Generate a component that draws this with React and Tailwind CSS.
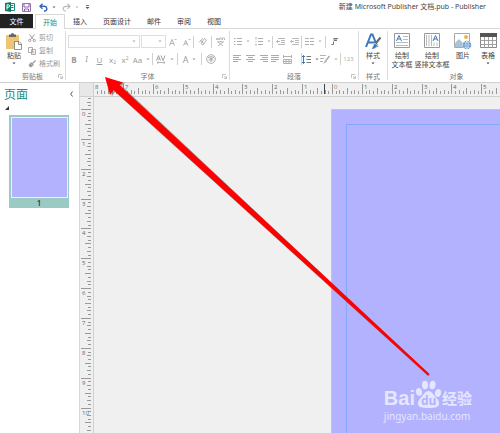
import React from "react";

const Svg = ({ w, h, children }) => (
  <svg width={w} height={h} viewBox={`0 0 ${w} ${h}`} fill="none" stroke="currentColor" className="shrink-0" aria-hidden="true">
    {children}
  </svg>
);

const Caret = () => (
  <Svg w={4} h={3}>
    <path d="M0.5 0.5h3L2 2.3z" fill="currentColor" stroke="none" />
  </Svg>
);

const Sep = () => <span className="h-3 w-px shrink-0 bg-[#d0d0d0]" />;

function Tool({ label, className, caret, children }) {
  return (
    <button aria-label={label} className={`flex h-4 shrink-0 items-center justify-center gap-1 ${className}`}>
      {children}
      {caret && <Caret />}
    </button>
  );
}

function Group({ title, className, launcher, children }) {
  return (
    <section className={`flex shrink-0 flex-col border-r border-[#dcdcdc] ${className}`}>
      <div className="h-[42px]">{children}</div>
      <div className="relative flex h-2 items-center justify-center text-[#777]">
        {title}
        {launcher && (
          <button aria-label={`${title}设置`} className="absolute right-0.5 top-0.5 text-[#aaa]">
            <Svg w={5} h={5}>
              <path d="M0.5 4V0.5H4M2 2l2.3 2.3M4.5 2v2.5H2" strokeWidth="0.7" />
            </Svg>
          </button>
        )}
      </div>
    </section>
  );
}

function Combo({ label, className }) {
  return (
    <label className={`relative block h-[13px] shrink-0 ${className}`}>
      <select aria-label={label} className="block h-full w-full appearance-none border border-[#dedede] bg-white" />
      <span className="pointer-events-none absolute right-1 top-[5px] text-[#aaa]">
        <Caret />
      </span>
    </label>
  );
}

const Lines = ({ rows, color = "currentColor" }) => (
  <Svg w={9} h={8}>
    {rows.map(([a, b], i) => (
      <path key={i} d={`M${a} ${i * 2 + 0.5}H${b}`} stroke={color} />
    ))}
  </Svg>
);

function BigTool({ icon, lines, caret, className }) {
  return (
    <button className={`flex shrink-0 flex-col items-center text-[#444] ${className}`}>
      <span className="mb-[2px] flex h-4 items-center">{icon}</span>
      {lines.map((l) => (
        <span key={l} className="block h-[9px] whitespace-nowrap leading-[9px]">{l}</span>
      ))}
      {caret && <span className="mt-0.5"><Caret /></span>}
    </button>
  );
}

const STEP = 29.85;

function useWindowSize() {
  const [size, setSize] = React.useState([window.innerWidth, window.innerHeight]);
  React.useEffect(() => {
    const update = () => setSize([window.innerWidth, window.innerHeight]);
    window.addEventListener("resize", update);
    return () => window.removeEventListener("resize", update);
  }, []);
  return size;
}

function makeTicks(from, zero, length) {
  const ticks = [];
  for (let i = from; zero + (i * STEP) / 8 < length; i++) ticks.push(i);
  return ticks;
}

const tickLength = (i) => (i % 8 === 0 ? 10 : i % 4 === 0 ? 6 : i % 2 === 0 ? 4 : 3);

function HorizontalRuler() {
  const [width] = useWindowSize();
  const zero = 238;
  const ticks = makeTicks(-63, zero, width - 94);
  const labels = [-64, ...ticks].filter((i) => i % 8 === 0 && zero + (i * STEP) / 8 < width - 100);
  return (
    <svg height="13" className="block w-full" aria-label="水平标尺">
      {ticks.map((i) => (
        <rect key={i} x={Math.round(zero + (i * STEP) / 8)} y={11 - tickLength(i)} width="1" height={tickLength(i)} fill="#999" />
      ))}
      {labels.map((i) => (
        <text key={i} x={Math.max(0, Math.round(zero + (i * STEP) / 8) + 2)} y="6" fontSize="6" fill={i === 0 ? "#a87850" : "#666"}>
          {Math.abs(i / 8)}
        </text>
      ))}
      <rect x="230" y="1" width="1" height="10" fill="#444" />
    </svg>
  );
}

function VerticalRuler() {
  const [, height] = useWindowSize();
  const zero = 12;
  const ticks = makeTicks(-3, zero, height - 97);
  return (
    <svg width="13" className="block h-full" aria-label="垂直标尺">
      {ticks.map((i) => (
        <rect key={i} x={11 - tickLength(i)} y={Math.round(zero + (i * STEP) / 8)} width={tickLength(i)} height="1" fill="#999" />
      ))}
      {ticks.filter((i) => i % 8 === 0).map((i) => (
        <text key={i} x="2" y={Math.round(zero + (i * STEP) / 8) + 7} fontSize="6" fill="#666">
          {i / 8}
        </text>
      ))}
    </svg>
  );
}

function TitleBar() {
  return (
    <header className="flex h-[14px] items-center justify-between pl-[5px] pr-[14px]">
      <div className="flex items-center">
        <Svg w={10} h={10}>
          <path d="M4.5 1.5h5v7h-5" fill="#fff" stroke="#188a72" />
          <path d="M6 3.5h2.500M6 5.500h2.500" stroke="#188a72" />
          <path d="M0 1l6-1v10l-6-1z" fill="#107c65" stroke="none" />
          <path d="M2 7.500V2.800h1.300a1.200 1.200 0 010 2.500H2" stroke="#fff" />
        </Svg>
        <button aria-label="保存" className="ml-[7px] text-[#8a62a8]">
          <Svg w={9} h={9}>
            <path d="M0.600 0.600h7.800v7.800H0.600z M2 1v3h5V1M2.500 8V6h4v2" strokeWidth="1" />
          </Svg>
        </button>
        <button aria-label="撤消" className="ml-2 flex items-center gap-1 text-[#3665b5]">
          <Svg w={9} h={9}>
            <path d="M3.500 0.800L1 3.300l2.500 2.500M1 3.300h4.500a2.400 2.400 0 01.6 4.700H5" strokeWidth="1.400" />
          </Svg>
          <span className="text-[#666]"><Caret /></span>
        </button>
        <button aria-label="恢复" className="ml-1.5 flex items-center gap-1 text-[#b9b9c2]">
          <Svg w={9} h={9}>
            <path d="M5.500 0.800L8 3.300L5.500 5.800M8 3.300H3.500a2.400 2.400 0 00-.6 4.700H4" strokeWidth="1.200" />
          </Svg>
          <Caret />
        </button>
        <button aria-label="自定义快速访问工具栏" className="ml-1.5 text-[#555]">
          <Svg w={5} h={6}>
            <path d="M1 1.500h3" strokeWidth="0.800" />
            <path d="M0.500 3h4L2.500 5z" fill="currentColor" stroke="none" />
          </Svg>
        </button>
      </div>
      <h1 className="whitespace-nowrap font-['Noto_Sans','Noto_Sans_CJK_SC',sans-serif] text-[7px] leading-3 text-[#444]">新建 Microsoft Publisher 文档.pub - Publisher</h1>
    </header>
  );
}

function Tabs() {
  return (
    <nav className="flex h-[15px] items-stretch border-b border-[#d8d8d8] text-[#333]">
      <button className="w-[33px] bg-[#222] text-white">文件</button>
      <button className="-mb-px ml-[2px] w-[30px] border border-b-0 border-[#d8d8d8] bg-white text-[#188a72]">开始</button>
      <div className="ml-2 flex gap-4">
        {["插入", "页面设计", "邮件", "审阅", "视图"].map((t) => (
          <button key={t}>{t}</button>
        ))}
      </div>
    </nav>
  );
}

function Ribbon() {
  return (
    <div className="flex h-[54px] overflow-hidden border-b border-[#d0d0d0] pt-[2px] pb-[2px]">
      <Group title="剪贴板" className="w-[66px]" launcher>
        <div className="flex pl-[6px]">
          <BigTool
            className="w-4 pt-[2px]"
            lines={["粘贴"]}
            caret
            icon={
              <Svg w={16} h={17}>
                <path d="M0 2h13v14H0z" fill="#eec575" stroke="none" />
                <path d="M3 1.500h2a1.500 1.500 0 013 0h2V4H3z" fill="#666" stroke="none" />
                <path d="M8.500 8.500h4.500l2.500 2.500v5.500h-7z M12.500 8.500v3h3" fill="#fff" stroke="#777" strokeWidth="0.800" />
              </Svg>
            }
          />
          <div className="ml-1.5 flex flex-col text-[#999]">
            <button className="flex h-[13px] items-center gap-[3px]">
              <Svg w={8} h={8}>
                <path d="M1.500 0.500l4 5M6.500 0.500l-4 5" />
                <circle cx="1.700" cy="6.500" r="1.100" /><circle cx="6.300" cy="6.500" r="1.100" />
              </Svg>
              剪切
            </button>
            <button className="flex h-[13px] items-center gap-[3px]">
              <Svg w={8} h={8}>
                <path d="M0.500 0.500h4v5h-4zM3.500 2.500h4v5h-4z" fill="#fff" strokeWidth="0.800" />
                <path d="M4.500 4.500h2M4.500 6h2" strokeWidth="0.600" />
              </Svg>
              复制
            </button>
            <button className="flex h-[13px] items-center gap-[3px]">
              <Svg w={8} h={8}>
                <path d="M7.500 0.500L4.500 3.500M2.500 2.500l3 3" strokeWidth="1.200" />
                <path d="M2 3L0.500 5.500l2 2L5 6z" fill="currentColor" stroke="none" />
              </Svg>
              格式刷
            </button>
          </div>
        </div>
      </Group>

      <Group title="字体" className="w-[164px]" launcher>
        <div className="flex h-[21px] items-center pl-[2px] text-[#aaa]">
          <Combo label="字体" className="w-[72px]" />
          <Combo label="字号" className="ml-px w-[25px]" />
          <Tool label="增大字号" className="w-[14px]">
            <Svg w={8} h={8}><path d="M0.500 7.500L3 1.500l2.500 6M1.500 5.500h3M5.500 2l1-1 1 1" strokeWidth="0.900" /></Svg>
          </Tool>
          <Tool label="减小字号" className="w-[13px]">
            <Svg w={8} h={8}><path d="M0.500 7.500L2.800 2.500l2.200 5M1.500 5.800h2.700M5.500 1l1 1 1-1" strokeWidth="0.900" /></Svg>
          </Tool>
          <Sep />
          <Tool label="清除格式" className="w-[17px]">
            <Svg w={9} h={9}><path d="M1 5.500l4-4.500M2 3.500l3 1.500M3 6.500l3.500-5 2 1.500-3.500 5zM4 5l2 1.500" strokeWidth="0.900" /></Svg>
          </Tool>
          <Sep />
          <Tool label="拼音指南" className="w-[17px]">
            <Svg w={9} h={9}><path d="M0 1l1 2 1-2 1 2 1-2M5 0v3M6.500 3V1h2v2M1 4.800h7M4.500 3.800v1M2 5l5 4M7 5l-5 4" strokeWidth="0.800" /></Svg>
          </Tool>
        </div>
        <div className="flex h-[14px] items-center pl-[2px] text-[8px] text-[#999]">
          <Tool label="加粗" className="w-3 font-bold">B</Tool>
          <Tool label="倾斜" className="w-[13px] font-serif italic">I</Tool>
          <Tool label="下划线" className="w-[13px] underline">U</Tool>
          <Tool label="下标" className="w-[13px]"><span>x<sub className="text-[5px]">2</sub></span></Tool>
          <Tool label="上标" className="w-3"><span>x<sup className="text-[5px]">2</sup></span></Tool>
          <Tool label="更改大小写" className="w-[21px]" caret>Aa</Tool>
          <Sep />
          <Tool label="字符间距" className="w-6" caret>
            <Svg w={10} h={9}>
              <path d="M0.500 5.500L2.500 0.500l2 5M1.300 4h2.400M5 0.500l2 5 2-5" strokeWidth="0.900" />
              <path d="M1 7.500h8M2.500 6.300L1 7.500l1.500 1.200M7.500 6.300L9 7.500 7.500 8.700" strokeWidth="0.700" />
            </Svg>
          </Tool>
          <Sep />
          <Tool label="字体颜色" className="w-[23px] text-[9px]" caret>A</Tool>
          <Sep />
          <Tool label="带圈字符" className="w-[18px]">
            <Svg w={10} h={10}>
              <circle cx="5" cy="5" r="4.300" strokeWidth="0.800" />
              <path d="M2.500 4V3h5v1M3.500 4.500h3L5 5.500V8M2.500 6h5M5 2v1" strokeWidth="0.800" />
            </Svg>
          </Tool>
        </div>
      </Group>

      <Group title="段落" className="w-[129px]" launcher>
        <div className="flex h-[21px] items-center pl-px text-[#b0b0b0]">
          <Tool label="项目符号" className="w-[22px]" caret>
            <Svg w={8} h={9}><path d="M0 1.500h1.500M3 1.500h5M0 4.500h1.500M3 4.500h5M0 7.500h1.500M3 7.500h5" /></Svg>
          </Tool>
          <Tool label="编号" className="w-[19px]" caret>
            <Svg w={8} h={9}><path d="M1 0v2.500M3 1.500h5M0.500 4.500h1M3 4.500h5M1 6.500v2.500M3 7.500h5" /></Svg>
          </Tool>
          <Sep />
          <Tool label="减少缩进" className="w-[15px]">
            <Svg w={9} h={8}><path d="M2 0.500h7M5 2.500h4M5 4.500h4M2 6.500h7M4 3.500H0.500M2 2L0.500 3.500 2 5" strokeWidth="0.900" /></Svg>
          </Tool>
          <Tool label="增加缩进" className="w-[13px]">
            <Svg w={9} h={8}><path d="M2 0.500h7M5 2.500h4M5 4.500h4M2 6.500h7M4 3.500H0.500M2 2L0.500 3.500 2 5" strokeWidth="0.900" /></Svg>
          </Tool>
          <Sep />
          <Tool label="分栏" className="w-[23px]" caret>
            <Svg w={9} h={7}><path d="M0 0.500h4M5 0.500h4M0 3.500h4M5 3.500h4M0 6.500h4M5 6.500h4" /></Svg>
          </Tool>
          <Sep />
          <Tool label="文字方向" className="w-[18px] text-[#777]">
            <Svg w={8} h={9}><path d="M3 1.500h4M3 1v2.500h3M5 1.500V3M0.500 7.500h2V4.500" /></Svg>
          </Tool>
        </div>
        <div className="flex h-[14px] items-center pl-px text-[#aaa]">
          <Tool label="左对齐" className="w-[13px]"><Lines rows={[[0, 8], [0, 6], [0, 8], [0, 5]]} /></Tool>
          <Tool label="居中" className="w-[13px]"><Lines rows={[[0, 9], [2, 7], [0, 9], [2, 7]]} /></Tool>
          <Tool label="右对齐" className="w-[12px]"><Lines rows={[[1, 9], [3, 9], [1, 9], [4, 9]]} /></Tool>
          <Tool label="两端对齐" className="w-[12px]"><Lines rows={[[0, 8], [0, 8], [0, 8], [0, 5]]} /></Tool>
          <Tool label="分散对齐" className="w-[13px]">
            <Svg w={9} h={9}><path d="M0.500 0v3M8.500 0v3M0 1.500h9M0.500 4.500h8v4h-8zM0 6.500h9M3 4v5M6 4v5" strokeWidth="0.900" /></Svg>
          </Tool>
          <span className="ml-[7px] flex items-center">
            <Sep />
            <Tool label="行距" className="w-[16px] text-[#777]" caret>
              <Svg w={9} h={9}>
                <path d="M1.500 0.500v8M0 2L1.500 0.500 3 2M0 7l1.500 1.500L3 7" stroke="#3b78b5" />
                <path d="M4.500 1.500H9M4.500 4.500H9M4.500 7.500H9" />
              </Svg>
            </Tool>
            <Tool label="段落底纹" className="w-[22px]" caret>
              <Svg w={10} h={9}>
                <path d="M0 0.500h6M0 3.500h4M0 6.500h3" strokeWidth="0.900" />
                <path d="M9.500 1L6 5.500" strokeWidth="1.500" /><path d="M5.500 5L7 6.500 3 9z" fill="currentColor" stroke="none" />
              </Svg>
            </Tool>
            <Sep />
            <Tool label="数字样式" className="w-[15px] text-[6px]">123</Tool>
          </span>
        </div>
      </Group>

      <Group title="样式" className="w-[29px]">
        <div className="flex justify-center pt-[2px]">
          <BigTool
            lines={["样式"]}
            caret
            icon={
              <Svg w={17} h={17}>
                <path d="M1 14L6 1.500h1.500L12.500 14M3 9.500h7.500" stroke="#3b78bd" strokeWidth="2" />
                <path d="M15.500 4.500L11 10" stroke="#666" strokeWidth="2" />
                <path d="M9.500 10l3 2.500c-1 3-4 4-6.500 3.500 2-1.500 2-4 3.500-6z" fill="#3b78bd" stroke="#fff" strokeWidth="0.600" />
              </Svg>
            }
          />
        </div>
      </Group>

      <section className="flex w-[153px] shrink-0 flex-col">
        <div className="flex h-[42px] pl-[2px] pt-[2px]">
          <BigTool
            className="w-6"
            lines={["绘制", "文本框"]}
            icon={
              <Svg w={16} h={16}>
                <path d="M0.500 0.500h15v14H0.500z" fill="#fff" stroke="#999" />
                <path d="M2.500 8L5 2.500 7.500 8M3.500 6h3" stroke="#3b78bd" />
                <path d="M9 3.500h5M9 6.500h5M2 9.500h12M2 12.500h12" stroke="#aaa" strokeWidth="0.800" />
              </Svg>
            }
          />
          <BigTool
            className="w-[36px]"
            lines={["绘制", "竖排文本框"]}
            icon={
              <Svg w={16} h={16}>
                <path d="M0.500 0.500h15v14H0.500z" fill="#fff" stroke="#999" />
                <path d="M9 8l2.500-5.500L14 8M10 6h3" stroke="#3b78bd" />
                <path d="M2.500 2v11M5 2v11M7.500 2v11M10 9.500V13M13 9.500V13" stroke="#aaa" strokeWidth="0.800" />
              </Svg>
            }
          />
          <BigTool
            className="w-[26px]"
            lines={["图片"]}
            icon={
              <Svg w={18} h={17}>
                <path d="M0.500 0.500h15v14H0.500z" fill="#fff" stroke="#aaa" />
                <path d="M1 14V10l4-4 4 4 2 4z" fill="#a9c3dc" stroke="none" />
                <circle cx="12" cy="4" r="2" fill="#f0b34a" stroke="none" />
                <circle cx="13" cy="12" r="4.300" fill="#3b78bd" stroke="#fff" strokeWidth="0.500" />
                <path d="M9 12h8M13 8v8M10 9.800h6M10 14.200h6M13 8c-2.500 2-2.500 6 0 8M13 8c2.500 2 2.500 6 0 8" stroke="#fff" strokeWidth="0.600" />
              </Svg>
            }
          />
          <BigTool
            className="w-[24px]"
            lines={["表格"]}
            caret
            icon={
              <Svg w={17} h={16}>
                <path d="M0.500 0.500h16v14H0.500z" fill="#fff" stroke="#888" />
                <path d="M0 0h17v4H0z" fill="#555" stroke="none" />
                <path d="M0 7.500h17M0 11.500h17M4.500 4v11M8.500 4v11M12.500 4v11" stroke="#999" strokeWidth="0.900" />
              </Svg>
            }
          />
        </div>
        <div className="flex h-2 items-center justify-center pr-4 text-[#777]">对象</div>
      </section>
    </div>
  );
}

function PagesPanel() {
  return (
    <aside className="w-[79px] shrink-0 bg-white">
      <div className="flex h-[22px] items-center justify-between pl-1 pr-[6px]">
        <h2 className="text-[12px] text-[#238b7a]">页面</h2>
        <button aria-label="折叠" className="text-[#555]">
          <Svg w={3} h={6}><path d="M2.500 0.500L0.700 3l1.800 2.500" /></Svg>
        </button>
      </div>
      <div className="h-[10px] pl-[5px] pt-px text-[#333]">
        <Svg w={4} h={4}><path d="M4 0v4H0z" fill="currentColor" stroke="none" /></Svg>
      </div>
      <button className="ml-[9px] flex h-[93px] w-[60px] flex-col items-center bg-[#9bcac5] pt-[2px]">
        <span className="h-[81px] w-[57px] border border-[#eef] bg-[#b2b2ff]" />
        <span className="text-[8px] font-semibold leading-[10px] text-[#333]">1</span>
      </button>
    </aside>
  );
}

function Watermark() {
  return (
    <div className="absolute bottom-[10px] right-[28px] flex flex-col text-[#e6e6ff]">
      <div className="flex items-end">
        <span className="font-['Liberation_Sans',sans-serif] text-[20px] font-bold leading-5">Bai</span>
        <svg width="27" height="28" viewBox="0 0 27 28" fill="currentColor" aria-hidden="true">
          <ellipse cx="4" cy="12" rx="3" ry="4" transform="rotate(-15 4 12)" />
          <ellipse cx="10" cy="5" rx="3" ry="4.200" />
          <ellipse cx="17.500" cy="5" rx="3" ry="4.200" transform="rotate(8 17.500 5)" />
          <ellipse cx="23" cy="13" rx="3" ry="4" transform="rotate(15 23 13)" />
          <path d="M13.500 11c3 0 4.500 3 6.500 5.500 2.500 2.500 4.500 4.500 4 7.500-.5 3-3 4-10.500 4S3.500 27 3 24c-.5-3 1.500-5 4-7.500C9 14 10.500 11 13.500 11z" />
          <text x="6" y="25" fontSize="12" fontWeight="bold" fill="#b2b2ff">du</text>
        </svg>
        <span className="text-[15px] font-bold leading-5">经验</span>
      </div>
      <span className="mt-px font-['Noto_Sans',sans-serif] text-[10px] leading-[14px]">jingyan.baidu.com</span>
    </div>
  );
}

export default function App() {
  return (
    <div className="relative flex h-screen w-full flex-col overflow-hidden bg-white font-['Open_Sans','Noto_Sans_CJK_SC',sans-serif] text-[7px] leading-[9px]">
      <TitleBar />
      <Tabs />
      <Ribbon />
      <main className="flex min-h-0 flex-1">
        <PagesPanel />
        <div className="flex min-w-0 flex-1 flex-col border-l border-[#d8d8d8] bg-[#f0f0f0]">
          <div className="flex h-[14px] shrink-0 border-b border-[#d0d0d0]">
            <div className="w-[14px] shrink-0 border-r border-[#d0d0d0] bg-[#e8e8e8]" />
            <div className="min-w-0 flex-1"><HorizontalRuler /></div>
          </div>
          <div className="flex min-h-0 flex-1">
            <div className="w-[14px] shrink-0 border-r border-[#d0d0d0]"><VerticalRuler /></div>
            <div className="flex min-w-0 flex-1 pl-[237px] pt-3">
              <div className="flex-1 border-l border-t border-[#c4c4d8] bg-[#b2b2ff] pl-[14px] pt-[14px]">
                <div className="h-full border-l border-t border-[#84a8ff]" />
              </div>
            </div>
          </div>
        </div>
      </main>
      <Watermark />
      <svg width="340" height="310" viewBox="0 0 340 310" className="pointer-events-none absolute left-[100px] top-[72px]" aria-hidden="true">
        <path d="M7 7l5 17 3-4L328 304l2-1L22 14l3-3z" fill="#555" opacity="0.500" />
        <path d="M5 5l5 18 3.500-5L328 303.500l1.500-1.500L19.500 13 23 10.500z" fill="#f00" />
      </svg>
    </div>
  );
}
